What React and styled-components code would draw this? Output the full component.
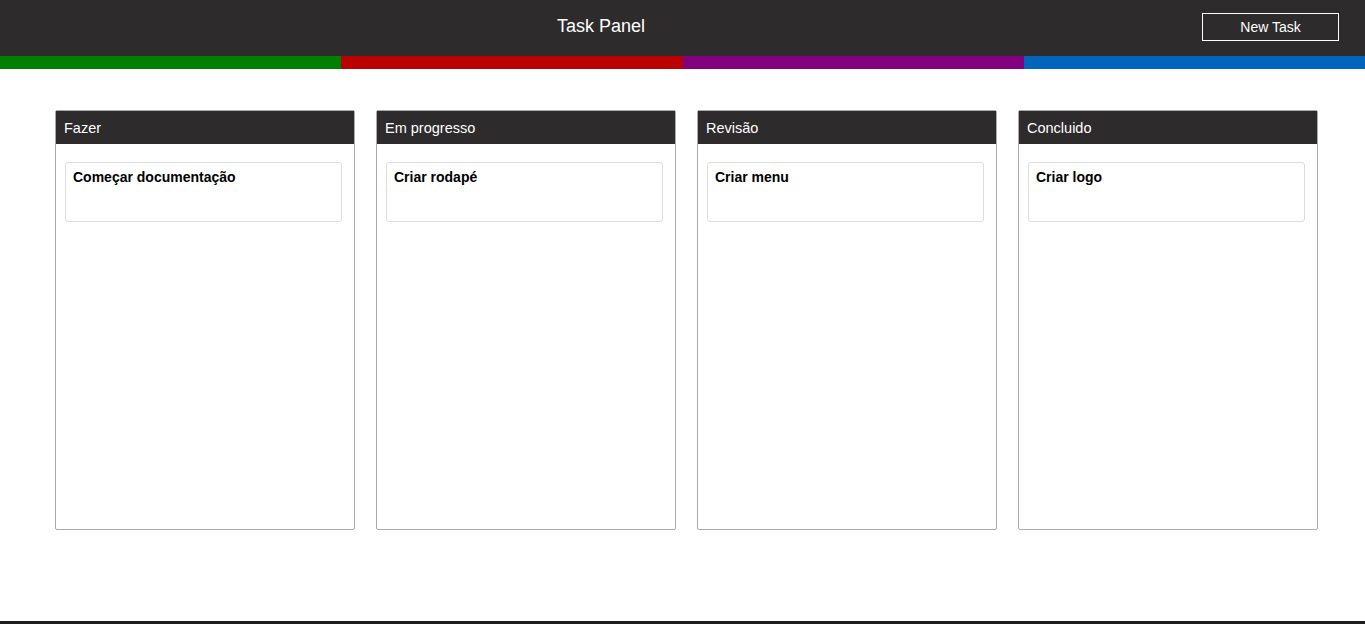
import React from "react";
import styled, { createGlobalStyle } from "styled-components";

const GlobalStyle = createGlobalStyle`
  body {
    margin: 0;
    font-family: Arial, "Liberation Sans", sans-serif;
    background: #fff;
  }
`;

const columns = [
  { title: "Fazer", tasks: ["Começar documentação"] },
  { title: "Em progresso", tasks: ["Criar rodapé"] },
  { title: "Revisão", tasks: ["Criar menu"] },
  { title: "Concluido", tasks: ["Criar logo"] },
];

const stripes = ["#008000", "#bb0000", "#800080", "#0066bb"];

function App() {
  return (
    <Page>
      <GlobalStyle />
      <TopBar>
        <Title>Task Panel</Title>
        <NewButton>New Task</NewButton>
      </TopBar>
      <Stripe>
        {stripes.map((c) => (
          <StripeSegment key={c} color={c} />
        ))}
      </Stripe>
      <Board>
        {columns.map((col) => (
          <Column key={col.title}>
            <ColumnHeader>{col.title}</ColumnHeader>
            <ColumnBody>
              {col.tasks.map((t) => (
                <TaskCard key={t}>{t}</TaskCard>
              ))}
            </ColumnBody>
          </Column>
        ))}
      </Board>
      <BottomEdge />
    </Page>
  );
}

export default App;

const Page = styled.div`
  min-height: 100vh;
  display: flex;
  flex-direction: column;
`;

const TopBar = styled.header`
  height: 56px;
  box-sizing: border-box;
  background-color: #2d2b2c;
  display: flex;
  align-items: center;
  padding: 0 26px 3px 0;
`;

const Title = styled.h1`
  flex: 1;
  margin: 0;
  text-align: center;
  color: #fff;
  font-size: 18px;
  font-weight: normal;
`;

const NewButton = styled.button`
  width: 137px;
  height: 28px;
  background: transparent;
  border: 1px solid #fff;
  color: #fff;
  font-family: inherit;
  font-size: 14px;
  cursor: pointer;
`;

const Stripe = styled.div`
  display: flex;
  height: 13px;
`;

const StripeSegment = styled.div`
  flex: 1;
  background-color: ${(p) => p.color};
`;

const Board = styled.main`
  flex: 1;
  display: flex;
  gap: 21px;
  padding: 41px 0 0 55px;
  align-items: flex-start;
`;

const Column = styled.section`
  width: 300px;
  height: 420px;
  box-sizing: border-box;
  border: 1px solid #aaa;
  border-radius: 2px;
  display: flex;
  flex-direction: column;
`;

const ColumnHeader = styled.div`
  height: 33px;
  background-color: #2d2b2c;
  color: #fff;
  font-size: 14.5px;
  display: flex;
  align-items: center;
  padding-left: 8px;
`;

const ColumnBody = styled.div`
  padding: 18px 12px 0 9px;
  display: flex;
  flex-direction: column;
  gap: 10px;
`;

const TaskCard = styled.div`
  height: 60px;
  box-sizing: border-box;
  border: 1px solid #ddd;
  border-radius: 3px;
  padding: 6px 7px;
  font-size: 14px;
  font-weight: bold;
  color: #000;
`;

const BottomEdge = styled.div`
  height: 3px;
  background-color: #1e1e1e;
`;
